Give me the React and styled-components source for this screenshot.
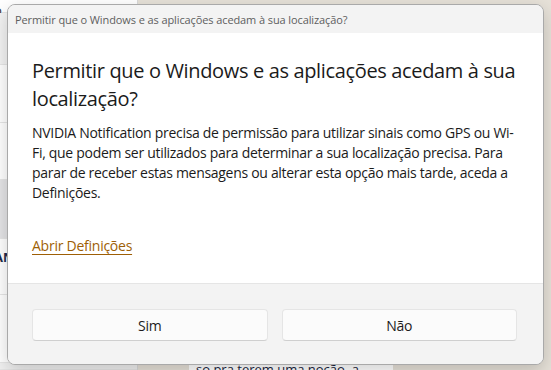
import React from "react";
import styled, { createGlobalStyle } from "styled-components";

const Global = createGlobalStyle`
  html, body { margin: 0; padding: 0; }
  body { width: 551px; height: 370px; overflow: hidden; font-family: "Open Sans", "Noto Sans", sans-serif; }
  #root { width: 551px; height: 370px; }
`;

const Screen = styled.div`
  position: relative;
  display: flex;
  width: 551px;
  height: 370px;
  overflow: hidden;
`;

const Sidebar = styled.div`
  width: 137px;
  display: flex;
  flex-direction: column;
  background: #ffffff;
  border-right: 1px solid #d9d9d9;
`;

const SideRow = styled.div`
  height: ${(p) => p.$h}px;
  flex: ${(p) => (p.$grow ? 1 : "none")};
  box-sizing: border-box;
  background: ${(p) => p.$bg || "#ffffff"};
  border-bottom: 1px solid #e6e6e6;
  display: flex;
  align-items: flex-start;
  padding-top: ${(p) => p.$pt || 0}px;
  font-family: "Open Sans", sans-serif;
  font-size: 13px;
  line-height: 16px;
  font-weight: ${(p) => (p.$bold ? 700 : 400)};
  color: ${(p) => (p.$bold ? "#1c2a4a" : "#333")};
`;

const CutText = styled.span`
  margin-left: -6px;
  white-space: nowrap;
`;

const ChatArea = styled.div`
  flex: 1;
  background: #e6e1d8;
  display: flex;
  flex-direction: column;
  justify-content: flex-end;
  padding-left: 51px;
`;

const Bubble = styled.div`
  width: 197px;
  height: 9px;
  background: #ffffff;
  padding: 0 0 0 7px;
  font-family: "Open Sans", sans-serif;
  font-size: 13px;
  line-height: 16px;
  color: #1b2540;
  overflow: visible;
  white-space: nowrap;
`;

const Dialog = styled.div`
  position: absolute;
  left: 7px;
  top: 4px;
  width: 537px;
  height: 361px;
  box-sizing: border-box;
  border: 1px solid #a9a9a9;
  border-radius: 8px;
  overflow: hidden;
  display: flex;
  flex-direction: column;
  background: #f3f3f3;
  box-shadow: 0 6px 18px rgba(0, 0, 0, 0.18);
  font-family: "Open Sans", "Noto Sans", sans-serif;
`;

const TitleBar = styled.div`
  height: 28px;
  flex: none;
  display: flex;
  align-items: center;
  padding-left: 7px;
  padding-top: 1px;
  box-sizing: border-box;
  font-size: 11px;
  color: #5e5e5e;
  background: #f3f3f3;
  letter-spacing: -0.1px;
`;

const Content = styled.div`
  flex: 1;
  background: #ffffff;
  padding: 24px 24px 0 24px;
  display: flex;
  flex-direction: column;
`;

const Heading = styled.h1`
  margin: 0;
  font-size: 20px;
  line-height: 28px;
  font-weight: 400;
  color: #1b1b1b;
  letter-spacing: -0.35px;
`;

const Body = styled.p`
  margin: 10px 0 0 0;
  font-size: 14px;
  line-height: 20px;
  color: #1b1b1b;
  letter-spacing: -0.3px;
`;

const Link = styled.a`
  margin-top: 33px;
  align-self: flex-start;
  font-size: 14px;
  line-height: 20px;
  color: #9e5f06;
  text-decoration: underline;
  text-underline-offset: 3px;
  letter-spacing: -0.25px;
  cursor: pointer;
`;

const Footer = styled.div`
  height: 81px;
  flex: none;
  box-sizing: border-box;
  border-top: 1px solid #e5e5e5;
  background: #f3f3f3;
  padding: 25px 26px 0 24px;
  display: grid;
  grid-template-columns: 1fr 1fr;
  column-gap: 14px;
  align-items: start;
`;

const Button = styled.button`
  height: 32px;
  box-sizing: border-box;
  background: #fbfbfb;
  border: 1px solid #e5e5e5;
  border-bottom-color: #cfcfcf;
  border-radius: 4px;
  font-family: "Open Sans", "Noto Sans", sans-serif;
  font-size: 14px;
  color: #1b1b1b;
  letter-spacing: -0.2px;
  padding: 0;
  cursor: pointer;
`;

export default function App() {
  return (
    <>
      <Global />
      <Screen>
        <Sidebar>
          <SideRow $h={13} $pt={2}>
            <CutText>o</CutText>
          </SideRow>
          <SideRow $h={52} $bg="#f3f3f3" />
          <SideRow $h={58} />
          <SideRow $h={57} />
          <SideRow $h={59} $bg="#e4e4e6" />
          <SideRow $h={56} $bold $pt={10}>
            <CutText>AN</CutText>
          </SideRow>
          <SideRow $h={68} />
          <SideRow $grow $bg="#f0f0f0" />
        </Sidebar>
        <ChatArea>
          <Bubble>so pra terem uma noção, a</Bubble>
        </ChatArea>
        <Dialog role="dialog">
          <TitleBar>Permitir que o Windows e as aplicações acedam à sua localização?</TitleBar>
          <Content>
            <Heading>Permitir que o Windows e as aplicações acedam à sua localização?</Heading>
            <Body>
              NVIDIA Notification precisa de permissão para utilizar sinais como GPS ou Wi-Fi, que podem ser utilizados
              para determinar a sua localização precisa. Para parar de receber estas mensagens ou alterar esta opção
              mais tarde, aceda a Definições.
            </Body>
            <Link>Abrir Definições</Link>
          </Content>
          <Footer>
            <Button>Sim</Button>
            <Button>Não</Button>
          </Footer>
        </Dialog>
      </Screen>
    </>
  );
}
